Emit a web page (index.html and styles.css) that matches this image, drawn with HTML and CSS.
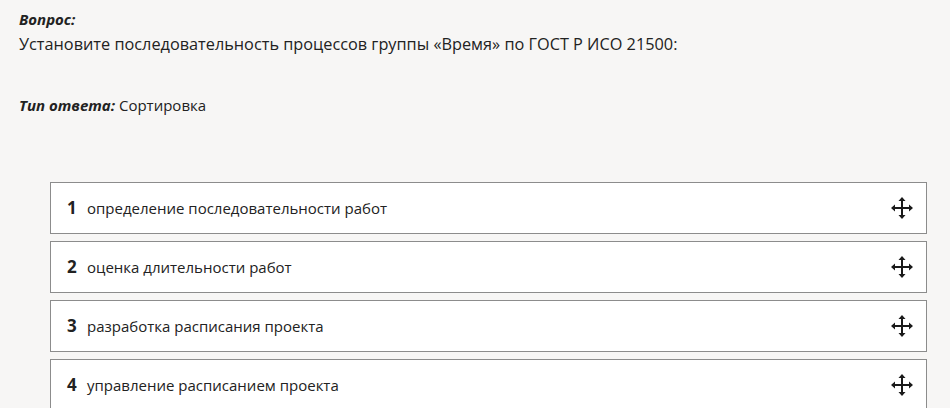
FILE: index.html
```html
<!DOCTYPE html>
<html lang="ru">
<head>
<meta charset="utf-8">
<link rel="stylesheet" href="styles.css">
</head>
<body>
<div class="page">
  <div class="label">Вопрос:</div>
  <div class="question">Установите последовательность процессов группы «Время» по ГОСТ Р ИСО 21500:</div>
  <div class="answer-type"><span class="label">Тип ответа:</span> Сортировка</div>
  <ul class="sort-list">
    <li class="sort-item"><span class="num">1</span><span class="text">определение последовательности работ</span>
      <svg class="move" viewBox="0 0 22 22" width="22" height="22"><path d="M11 3V19M3 11H19" stroke="#1a1a1a" stroke-width="2"/><path d="M11 0L7.5 4H14.5ZM11 22L7.5 18H14.5ZM0 11L4 7.5V14.5ZM22 11L18 7.5V14.5Z" fill="#1a1a1a"/></svg></li>
    <li class="sort-item"><span class="num">2</span><span class="text">оценка длительности работ</span>
      <svg class="move" viewBox="0 0 22 22" width="22" height="22"><path d="M11 3V19M3 11H19" stroke="#1a1a1a" stroke-width="2"/><path d="M11 0L7.5 4H14.5ZM11 22L7.5 18H14.5ZM0 11L4 7.5V14.5ZM22 11L18 7.5V14.5Z" fill="#1a1a1a"/></svg></li>
    <li class="sort-item"><span class="num">3</span><span class="text">разработка расписания проекта</span>
      <svg class="move" viewBox="0 0 22 22" width="22" height="22"><path d="M11 3V19M3 11H19" stroke="#1a1a1a" stroke-width="2"/><path d="M11 0L7.5 4H14.5ZM11 22L7.5 18H14.5ZM0 11L4 7.5V14.5ZM22 11L18 7.5V14.5Z" fill="#1a1a1a"/></svg></li>
    <li class="sort-item"><span class="num">4</span><span class="text">управление расписанием проекта</span>
      <svg class="move" viewBox="0 0 22 22" width="22" height="22"><path d="M11 3V19M3 11H19" stroke="#1a1a1a" stroke-width="2"/><path d="M11 0L7.5 4H14.5ZM11 22L7.5 18H14.5ZM0 11L4 7.5V14.5ZM22 11L18 7.5V14.5Z" fill="#1a1a1a"/></svg></li>
  </ul>
</div>
</body>
</html>
```
FILE: styles.css
```css
html, body {
  margin: 0;
  padding: 0;
  background: #f7f6f5;
  overflow: hidden;
}
.page {
  padding: 7px 23px 0 19px;
  font-family: "Open Sans", "Noto Sans", sans-serif;
  font-size: 15px;
  line-height: 24px;
  color: #222;
}
.label {
  font-weight: 700;
  font-style: italic;
  color: #222;
}
.question {
  font-size: 16.3px;
  line-height: 26px;
  margin-bottom: 36px;
}
.answer-type {
  margin-bottom: 65px;
}
.sort-list {
  list-style: none;
  margin: 0 0 0 31px;
  padding: 0;
  display: flex;
  flex-direction: column;
  gap: 7px;
}
.sort-item {
  display: flex;
  align-items: center;
  height: 50px;
  border: 1px solid #8c8c8c;
  background: #fff;
  padding: 0 13px 0 16px;
}
.num {
  font-weight: 700;
  font-size: 17px;
  width: 20px;
  color: #222;
}
.text {
  flex: 1;
}
.move {
  display: block;
}
```
